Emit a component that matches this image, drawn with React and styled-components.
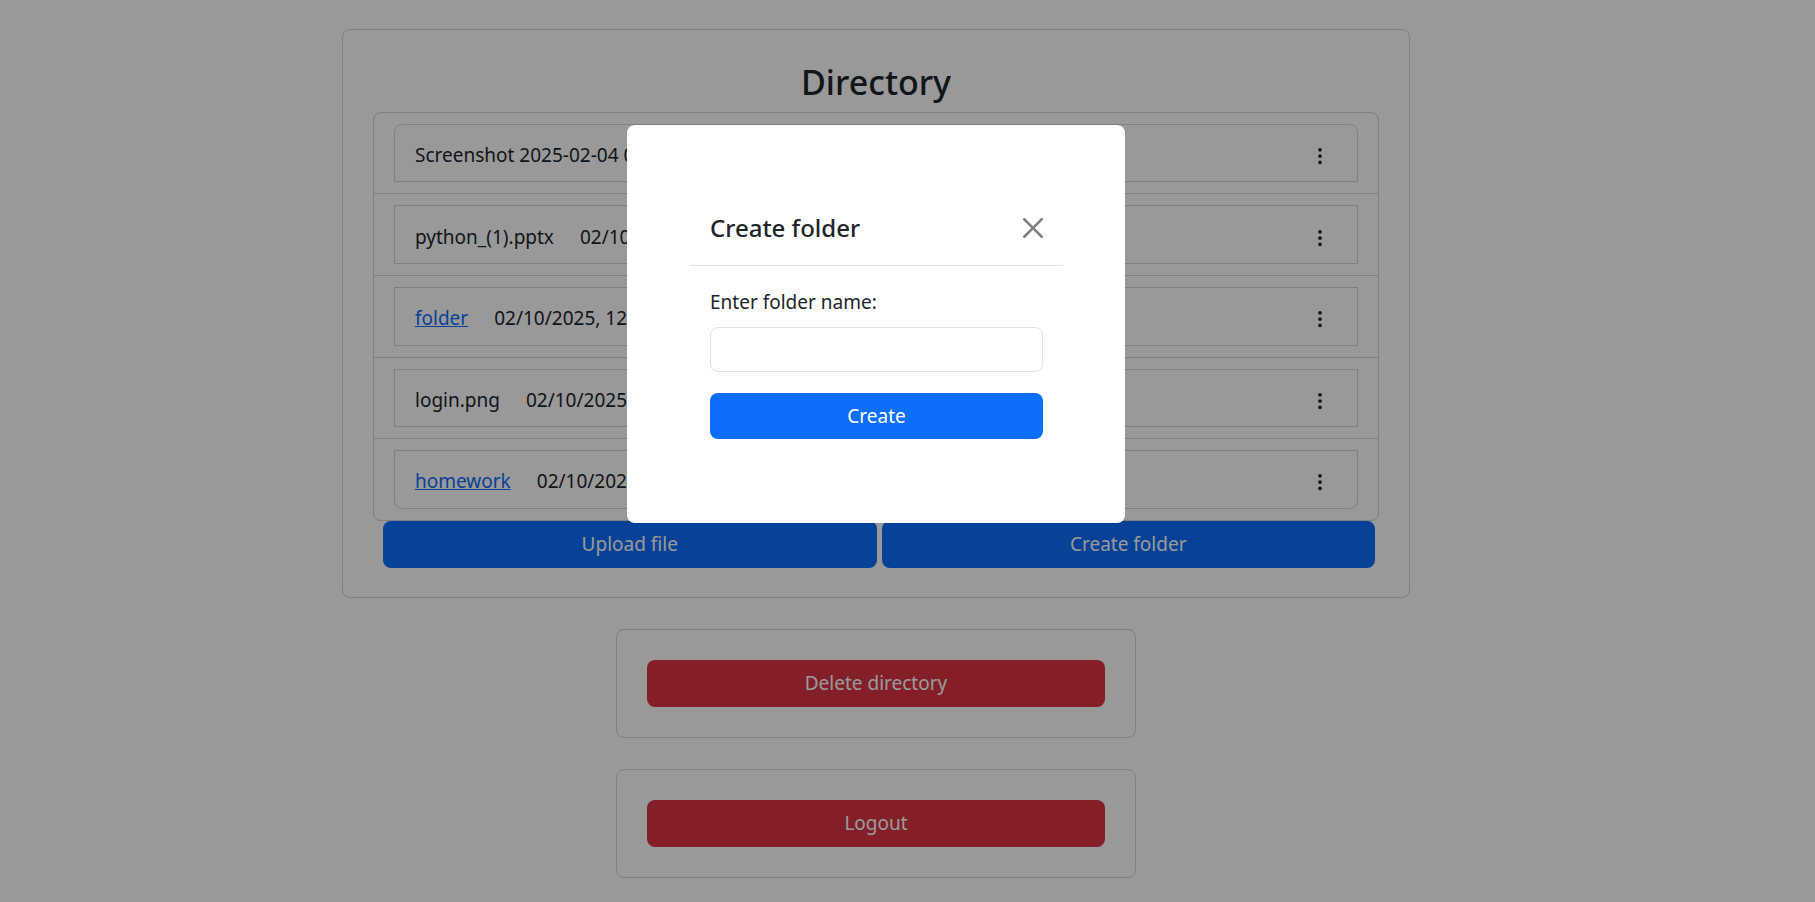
import React from "react";
import styled, { createGlobalStyle } from "styled-components";

const GlobalStyle = createGlobalStyle`
  * {
    box-sizing: border-box;
  }
  body {
    margin: 0;
    background: #ffffff;
    color: #212529;
    font-family: "Noto Sans", "Open Sans", sans-serif;
    font-size: 19px;
  }
`;

const Page = styled.div`
  width: 1752px;
  display: flex;
  flex-direction: column;
  align-items: center;
  padding-top: 29px;
  padding-bottom: 30px;
`;

const Card = styled.div`
  width: ${(p) => p.$width}px;
  border: 1px solid #d5d5d5;
  border-radius: 8px;
  background: #ffffff;
  padding: ${(p) => p.$padding};
  & + & {
    margin-top: 31px;
  }
`;

const Heading = styled.h3`
  margin: 32px 0 9px;
  text-align: center;
  font-size: 34px;
  font-weight: 500;
  line-height: 1.2;
`;

const List = styled.ul`
  list-style: none;
  margin: 0;
  padding: 0;
  border: 1px solid #d5d5d5;
  border-radius: 8px;
`;

const Row = styled.li`
  padding: 11px 20px;
  & + & {
    border-top: 1px solid #d5d5d5;
  }
`;

const Entry = styled.div`
  display: flex;
  align-items: center;
  gap: 26px;
  min-height: 58.6px;
  padding: 4px 20px 0;
  border: 1px solid #d5d5d5;
  border-radius: ${(p) => (p.$first ? "8px 8px 0 0" : p.$last ? "0 0 8px 8px" : "0")};
  line-height: 30px;
`;

const FileName = styled.span`
  white-space: nowrap;
`;

const FolderLink = styled.a`
  color: #0d6efd;
  text-decoration: underline;
  white-space: nowrap;
`;

const DateText = styled.span`
  white-space: nowrap;
`;

const KebabButton = styled.button`
  margin-left: auto;
  width: 34px;
  padding: 2px 0 0;
  border: none;
  background: transparent;
  display: flex;
  justify-content: center;
  color: #212529;
`;

const ActionRow = styled.div`
  display: flex;
  gap: 5px;
  padding: 0 4px 0 10px;
  & > * {
    flex: 1;
  }
`;

const Button = styled.button`
  display: block;
  width: 100%;
  height: ${(p) => p.$height || 47}px;
  border: none;
  border-radius: 8px;
  background: ${(p) => (p.$variant === "danger" ? "#dc3545" : "#0d6efd")};
  color: #ffffff;
  font-family: inherit;
  font-size: 19px;
`;

const Backdrop = styled.div`
  position: fixed;
  inset: 0;
  background: rgba(0, 0, 0, 0.4);
`;

const ModalLayer = styled.div`
  position: fixed;
  inset: 0;
  display: flex;
  justify-content: center;
  align-items: flex-start;
  padding: 125px 63px 0 0;
`;

const Modal = styled.div`
  width: 498px;
  background: #ffffff;
  border-radius: 8px;
  padding: 63px 62px 64px 63px;
`;

const ModalHeader = styled.div`
  display: flex;
  align-items: center;
  justify-content: space-between;
  padding: 22px 20px 19px;
  border-bottom: 1px solid #dee2e6;
`;

const ModalTitle = styled.h5`
  margin: 0;
  font-size: 24px;
  font-weight: 500;
  line-height: 36px;
`;

const CloseButton = styled.button`
  border: none;
  background: transparent;
  padding: 0;
  display: flex;
  opacity: 0.5;
`;

const ModalBody = styled.div`
  padding: 21px 20px 20px;
  display: flex;
  flex-direction: column;
`;

const Label = styled.label`
  line-height: 30px;
  margin-bottom: 10px;
`;

const Input = styled.input`
  height: 45px;
  border: 1px solid #dee2e6;
  border-radius: 8px;
  padding: 0 15px;
  font-family: inherit;
  font-size: 19px;
  margin-bottom: 21px;
`;

const files = [
  { name: "Screenshot 2025-02-04 094512.png", date: "02/10/2025, 12:41:07 PM" },
  { name: "python_(1).pptx", date: "02/10/2025, 12:39:52 PM" },
  { name: "folder", date: "02/10/2025, 12:38:10 PM", folder: true },
  { name: "login.png", date: "02/10/2025, 12:36:44 PM" },
  { name: "homework", date: "02/10/2025, 12:35:03 PM", folder: true },
];

const DotsIcon = () => (
  <svg width="20" height="20" viewBox="0 0 16 16" fill="currentColor">
    <path d="M9.5 13a1.5 1.5 0 1 1-3 0 1.5 1.5 0 0 1 3 0m0-5a1.5 1.5 0 1 1-3 0 1.5 1.5 0 0 1 3 0m0-5a1.5 1.5 0 1 1-3 0 1.5 1.5 0 0 1 3 0" />
  </svg>
);

const CloseIcon = () => (
  <svg width="20" height="20" viewBox="0 0 16 16" fill="#000">
    <path d="M.293.293a1 1 0 0 1 1.414 0L8 6.586 14.293.293a1 1 0 1 1 1.414 1.414L9.414 8l6.293 6.293a1 1 0 0 1-1.414 1.414L8 9.414l-6.293 6.293a1 1 0 0 1-1.414-1.414L6.586 8 .293 1.707a1 1 0 0 1 0-1.414z" />
  </svg>
);

const App = () => {
  return (
    <>
      <GlobalStyle />
      <Page>
        <Card $width={1068} $padding="0 30px 29px">
          <Heading>Directory</Heading>
          <List>
            {files.map((f, i) => (
              <Row key={f.name}>
                <Entry $first={i === 0} $last={i === files.length - 1}>
                  {f.folder ? (
                    <FolderLink href="#">{f.name}</FolderLink>
                  ) : (
                    <FileName>{f.name}</FileName>
                  )}
                  <DateText>{f.date}</DateText>
                  <KebabButton>
                    <DotsIcon />
                  </KebabButton>
                </Entry>
              </Row>
            ))}
          </List>
          <ActionRow>
            <Button>Upload file</Button>
            <Button>Create folder</Button>
          </ActionRow>
        </Card>
        <Card $width={520} $padding="30px">
          <Button $variant="danger">Delete directory</Button>
        </Card>
        <Card $width={520} $padding="30px">
          <Button $variant="danger">Logout</Button>
        </Card>
      </Page>
      <Backdrop />
      <ModalLayer>
        <Modal>
          <ModalHeader>
            <ModalTitle>Create folder</ModalTitle>
            <CloseButton>
              <CloseIcon />
            </CloseButton>
          </ModalHeader>
          <ModalBody>
            <Label>Enter folder name:</Label>
            <Input />
            <Button $height={46}>Create</Button>
          </ModalBody>
        </Modal>
      </ModalLayer>
    </>
  );
};

export default App;
